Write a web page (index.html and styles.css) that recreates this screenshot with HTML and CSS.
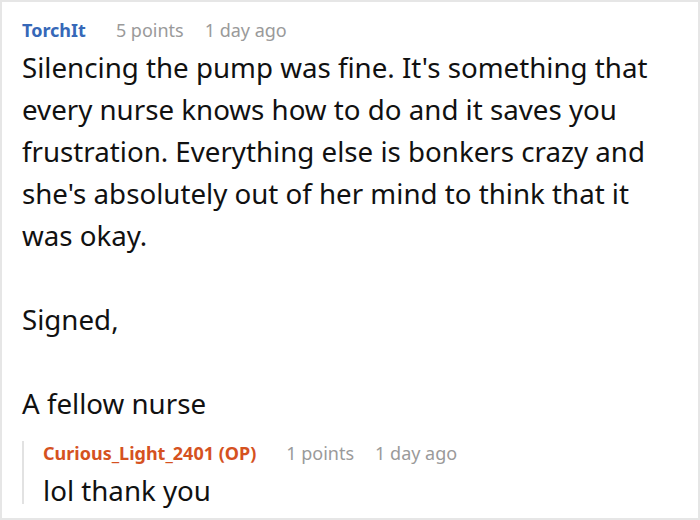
FILE: index.html
```html
<!DOCTYPE html>
<html lang="en">
<head>
  <meta charset="UTF-8" />
  <title>Comments</title>
  <meta name="viewport" content="width=device-width, initial-scale=1.0" />
  <link rel="stylesheet" href="styles.css">
</head>
<body>

  <div class="thread">
    <div class="comment">
      <div class="meta">
        <span class="author">TorchIt</span>
        <span class="score">5 points</span>
        <span class="time">1 day ago</span>
      </div>
      <div class="body">
        <p>Silencing the pump was fine. It's something that every nurse knows how to do and it saves you frustration. Everything else is bonkers crazy and she's absolutely out of her mind to think that it was okay.</p>
        <p>Signed,</p>
        <p>A fellow nurse</p>
      </div>

      <!-- replies -->
      <div class="reply">
        <div class="meta">
          <span class="author op">Curious_Light_2401 (OP)</span>
          <span class="score">1 points</span>
          <span class="time">1 day ago</span>
        </div>
        <div class="body">
          <p>lol thank you</p>
        </div>
      </div>
    </div>
  </div>

</body>
</html>
```

FILE: styles.css
```css
body {
  font-family: 'Noto Sans', 'Open Sans', sans-serif;
  margin: 0;
  padding: 0;
  background: white;
}

.thread {
  width: 700px;
  height: 520px;
  box-sizing: border-box;
  border: 2px solid #e6e6e6;
  overflow: hidden;
}

.comment {
  padding: 16px 20px 0 20px;
}

.meta {
  display: flex;
  align-items: baseline;
  font-size: 18px;
  line-height: 24px;
  color: #9a9a9a;
}

.author {
  font-weight: bold;
  color: #3668b8;
  margin-right: 30px;
}

.author.op {
  color: #d5521f;
}

.score {
  margin-right: 21px;
}

.body {
  font-size: 27.7px;
  line-height: 42px;
  color: #111;
  margin-top: 4px;
}

.body p {
  margin: 0 0 42px;
}

.body p:last-child {
  margin-bottom: 0;
}

.reply {
  margin-top: 27px;
  padding-left: 19px;
  border-left: 2px solid #e2e2e2;
}

.reply .meta {
  margin-top: -10px;
}

.reply .body {
  line-height: 28px;
  margin-top: 11px;
}
```
